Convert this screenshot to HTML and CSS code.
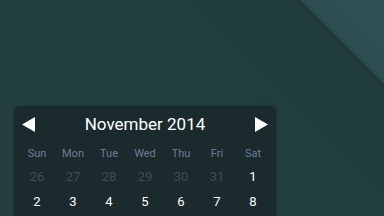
FILE: index.html
```html
<!DOCTYPE html>
<html lang="en">
<head>
    <meta charset="UTF-8">
    <title>Calendar</title>
    <link rel="stylesheet" href="styles.css">
</head>
<body>
    <div class="calendar">
        <div class="cal-header">
            <svg class="arrow" width="13" height="15" viewBox="0 0 13 15"><polygon points="13,0 13,15 0,7.5" fill="#fff"/></svg>
            <span class="cal-title">November 2014</span>
            <svg class="arrow" width="13" height="15" viewBox="0 0 13 15"><polygon points="0,0 0,15 13,7.5" fill="#fff"/></svg>
        </div>
        <div class="cal-grid">
            <div class="dow">Sun</div>
            <div class="dow">Mon</div>
            <div class="dow">Tue</div>
            <div class="dow">Wed</div>
            <div class="dow">Thu</div>
            <div class="dow">Fri</div>
            <div class="dow">Sat</div>

            <div class="day other">26</div>
            <div class="day other">27</div>
            <div class="day other">28</div>
            <div class="day other">29</div>
            <div class="day other">30</div>
            <div class="day other">31</div>
            <div class="day">1</div>

            <div class="day">2</div>
            <div class="day">3</div>
            <div class="day">4</div>
            <div class="day">5</div>
            <div class="day">6</div>
            <div class="day">7</div>
            <div class="day">8</div>
        </div>
    </div>
</body>
</html>
```

FILE: styles.css
```css
html, body {
    margin: 0;
    height: 100%;
    overflow: hidden;
}

body {
    font-family: Roboto, "Noto Sans", sans-serif;
    background:
        linear-gradient(45deg, #233f42 0%, #223d40 85%, #1f3739 85.6%, #2c4e50 86.4%, #2e5153 100%);
    padding: 106px 0 0 14px;
    box-sizing: border-box;
}

.calendar {
    width: 262px;
    height: 110px;
    background: #1a2a2d;
    border-radius: 6px 6px 0 0;
    padding: 0 5px;
    box-sizing: border-box;
    box-shadow: 0 0 3px rgba(0, 0, 0, 0.25);
}

.cal-header {
    height: 36px;
    display: flex;
    align-items: center;
    justify-content: space-between;
    padding: 0 3px;
}

.cal-title {
    color: #ffffff;
    font-size: 17px;
}

.cal-grid {
    display: grid;
    grid-template-columns: repeat(7, 36px);
    grid-template-rows: 22px 25px 25px;
}

.dow {
    display: flex;
    align-items: center;
    justify-content: center;
    font-size: 11px;
    color: #6e7e96;
}

.day {
    display: flex;
    align-items: center;
    justify-content: center;
    font-size: 13px;
    color: #ffffff;
}

.day.other {
    color: #3e4f52;
}
```
